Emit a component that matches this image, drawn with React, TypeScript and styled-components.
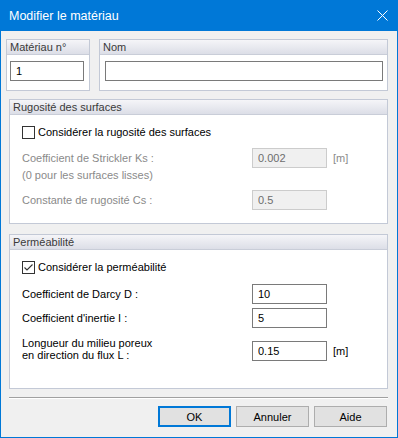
import React from "react";
import styled, { createGlobalStyle, css } from "styled-components";

const GlobalStyle = createGlobalStyle`
  html, body { margin: 0; padding: 0; background: #ffffff; }
  * { box-sizing: border-box; }
`;

const FONT = `"Liberation Sans", Arial, sans-serif`;

const Window = styled.div`
  width: 398px;
  height: 438px;
  border: 1px solid #0078d7;
  border-top: none;
  display: flex;
  flex-direction: column;
  font-family: ${FONT};
  font-size: 11px;
  color: #000;
`;

const TitleBar = styled.div`
  height: 31px;
  flex: none;
  background: #0078d7;
  display: flex;
  align-items: center;
  justify-content: space-between;
  padding: 0 9px 0 8px;
`;

const Title = styled.span`
  color: #ffffff;
  font-size: 12.5px;
  line-height: 16px;
`;

const CloseIcon = styled.svg`
  width: 11px;
  height: 11px;
  display: block;
`;

const Body = styled.div`
  flex: 1;
  background: #f0f0f0;
  display: flex;
  flex-direction: column;
  padding: 8px 9px 10px 8px;
`;

const TopRow = styled.div`
  display: flex;
  gap: 9px;
  margin-left: -3px;
`;

const GroupBox = styled.div<{ $width?: number; $mt?: number }>`
  background: #ffffff;
  border: 1px solid #c3c9d6;
  display: flex;
  flex-direction: column;
  ${(p) => (p.$width ? css`width: ${p.$width}px; flex: none;` : css`flex: 1;`)}
  margin-top: ${(p) => p.$mt ?? 0}px;
`;

const GroupHeader = styled.div`
  height: 15px;
  line-height: 14px;
  padding-left: 3px;
  border-bottom: 1px solid #c9cdd8;
  background: linear-gradient(#f5f5f8, #dcdee7);
  color: #3a3a3a;
  font-size: 11px;
`;

const InputBody = styled.div<{ $pl: number; $pr: number }>`
  padding: 6px ${(p) => p.$pr}px 9px ${(p) => p.$pl}px;
`;

const FormBody = styled.div<{ $pb: number }>`
  display: flex;
  flex-direction: column;
  padding: 0 0 ${(p) => p.$pb}px 12px;
`;

const TextInput = styled.input<{ $off?: boolean }>`
  display: block;
  width: 100%;
  height: 20px;
  margin: 0;
  padding: 0 0 0 5px;
  font-family: ${FONT};
  font-size: 11px;
  outline: none;
  border-radius: 0;
  border: 1px solid ${(p) => (p.$off ? "#cccccc" : "#7a7a7a")};
  background: ${(p) => (p.$off ? "#f0f0f0" : "#ffffff")};
  color: ${(p) => (p.$off ? "#6d6d6d" : "#000000")};
`;

const CheckRow = styled.label<{ $mt: number }>`
  display: flex;
  align-items: center;
  gap: 3px;
  height: 13px;
  margin-top: ${(p) => p.$mt}px;
  line-height: 13px;
`;

const CheckBox = styled.span`
  width: 13px;
  height: 13px;
  border: 1px solid #333333;
  background: #ffffff;
  display: flex;
  align-items: center;
  justify-content: center;
  flex: none;
`;

const FieldRow = styled.div<{ $mt: number; $end?: boolean }>`
  display: grid;
  grid-template-columns: 1fr 75px 60px;
  align-items: ${(p) => (p.$end ? "end" : "center")};
  margin-top: ${(p) => p.$mt}px;
`;

const FieldLabel = styled.span<{ $off?: boolean }>`
  color: ${(p) => (p.$off ? "#8a8a8a" : "#000000")};
  line-height: 12px;
`;

const Unit = styled.span<{ $off?: boolean }>`
  padding-left: 6px;
  line-height: 20px;
  color: ${(p) => (p.$off ? "#8a8a8a" : "#000000")};
`;

const Note = styled.div`
  color: #8a8a8a;
  height: 14px;
  line-height: 14px;
`;

const Separator = styled.div`
  margin-top: 8px;
  height: 2px;
  border-top: 1px solid #a0a0a0;
  border-bottom: 1px solid #ffffff;
`;

const ButtonBar = styled.div`
  display: flex;
  justify-content: flex-end;
  gap: 5px;
  margin-top: 7px;
  padding-right: 1px;
`;

const Button = styled.button<{ $primary?: boolean }>`
  width: 73px;
  height: 21px;
  margin: 0;
  padding: 0;
  font-family: ${FONT};
  font-size: 11px;
  color: #000;
  background: #e1e1e1;
  border: ${(p) => (p.$primary ? "2px solid #0078d7" : "1px solid #adadad")};
  border-radius: 0;
`;

function Check({ checked }: { checked: boolean }) {
  return (
    <CheckBox>
      {checked && (
        <svg width="11" height="11" viewBox="0 0 11 11">
          <polyline points="1.5,5.5 4,8 9.5,2.5" fill="none" stroke="#333" strokeWidth="1.1" />
        </svg>
      )}
    </CheckBox>
  );
}

export default function App() {
  return (
    <>
      <GlobalStyle />
      <Window>
        <TitleBar>
          <Title>Modifier le matériau</Title>
          <CloseIcon viewBox="0 0 11 11">
            <path d="M0.5 0.5 L10.5 10.5 M10.5 0.5 L0.5 10.5" stroke="#fff" strokeWidth="1" />
          </CloseIcon>
        </TitleBar>
        <Body>
          <TopRow>
            <GroupBox $width={84}>
              <GroupHeader>Matériau n°</GroupHeader>
              <InputBody $pl={3} $pr={5}>
                <TextInput defaultValue="1" />
              </InputBody>
            </GroupBox>
            <GroupBox>
              <GroupHeader>Nom</GroupHeader>
              <InputBody $pl={5} $pr={4}>
                <TextInput defaultValue="" />
              </InputBody>
            </GroupBox>
          </TopRow>

          <GroupBox $mt={8}>
            <GroupHeader>Rugosité des surfaces</GroupHeader>
            <FormBody $pb={12}>
              <CheckRow $mt={11}>
                <Check checked={false} />
                <span>Considérer la rugosité des surfaces</span>
              </CheckRow>
              <FieldRow $mt={9}>
                <FieldLabel $off>Coefficient de Strickler Ks :</FieldLabel>
                <TextInput $off disabled defaultValue="0.002" />
                <Unit $off>[m]</Unit>
              </FieldRow>
              <Note>(0 pour les surfaces lisses)</Note>
              <FieldRow $mt={8}>
                <FieldLabel $off>Constante de rugosité Cs :</FieldLabel>
                <TextInput $off disabled defaultValue="0.5" />
                <span />
              </FieldRow>
            </FormBody>
          </GroupBox>

          <GroupBox $mt={10}>
            <GroupHeader>Perméabilité</GroupHeader>
            <FormBody $pb={27}>
              <CheckRow $mt={11}>
                <Check checked={true} />
                <span>Considérer la perméabilité</span>
              </CheckRow>
              <FieldRow $mt={10}>
                <FieldLabel>Coefficient de Darcy D :</FieldLabel>
                <TextInput defaultValue="10" />
                <span />
              </FieldRow>
              <FieldRow $mt={4}>
                <FieldLabel>Coefficient d'inertie I :</FieldLabel>
                <TextInput defaultValue="5" />
                <span />
              </FieldRow>
              <FieldRow $mt={9} $end>
                <FieldLabel>
                  Longueur du milieu poreux
                  <br />
                  en direction du flux L :
                </FieldLabel>
                <TextInput defaultValue="0.15" />
                <Unit>[m]</Unit>
              </FieldRow>
            </FormBody>
          </GroupBox>

          <Separator />
          <ButtonBar>
            <Button $primary>OK</Button>
            <Button>Annuler</Button>
            <Button>Aide</Button>
          </ButtonBar>
        </Body>
      </Window>
    </>
  );
}
